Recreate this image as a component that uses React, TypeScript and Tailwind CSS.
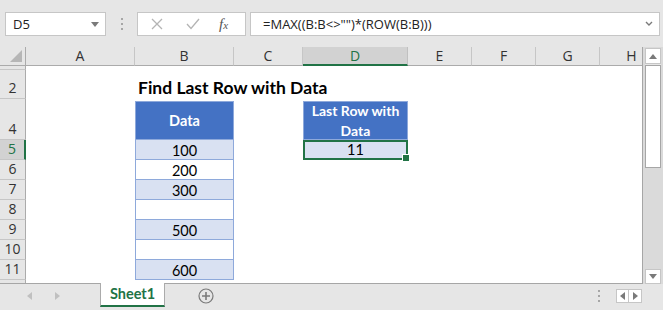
import React from "react";

const COLS = ["A", "B", "C", "D", "E", "F", "G", "H"];

function Tri({ dir, className }: { dir: "up" | "down" | "left" | "right"; className?: string }) {
  const pts: Record<string, string> = {
    up: "0,5 4,0 8,5",
    down: "0,0 8,0 4,5",
    left: "5,0 5,8 0,4",
    right: "0,0 0,8 5,4",
  };
  const w = dir === "up" || dir === "down" ? 8 : 5;
  const h = dir === "up" || dir === "down" ? 5 : 8;
  return (
    <svg width={w} height={h} viewBox={`0 0 ${w} ${h}`} className={className}>
      <polygon points={pts[dir]} fill="currentColor" />
    </svg>
  );
}

function Dots() {
  return (
    <div className="flex flex-col gap-[3px]">
      <div className="w-[2px] h-[2px] bg-[#a6a6a6]" />
      <div className="w-[2px] h-[2px] bg-[#a6a6a6]" />
      <div className="w-[2px] h-[2px] bg-[#a6a6a6]" />
    </div>
  );
}

export default function App() {
  const tableRows = [
    { r: 5, v: "100" },
    { r: 6, v: "200" },
    { r: 7, v: "300" },
    { r: 8, v: "" },
    { r: 9, v: "500" },
    { r: 10, v: "" },
    { r: 11, v: "600" },
  ];
  const gridRow = (r: number) => r + 1;
  const rowLabels = [
    { r: 1, label: "" },
    { r: 2, label: "2" },
    { r: 3, label: "" },
    { r: 4, label: "4" },
    { r: 5, label: "5" },
    { r: 6, label: "6" },
    { r: 7, label: "7" },
    { r: 8, label: "8" },
    { r: 9, label: "9" },
    { r: 10, label: "10" },
    { r: 11, label: "11" },
  ];

  return (
    <div
      className="w-[663px] h-[310px] bg-[#e6e6e6] flex flex-col overflow-hidden text-[#222]"
      style={{ fontFamily: '"Open Sans", "Liberation Sans", sans-serif' }}
    >
      {/* Formula bar */}
      <div className="h-[47px] flex items-start pt-[12px] pl-[5px]">
        <div className="w-[101px] h-[24px] bg-white border border-[#c6c6c6] flex items-center pl-[7px] pr-[6px] justify-between">
          <span className="text-[13px] leading-none">D5</span>
          <Tri dir="down" className="text-[#7a7a7a]" />
        </div>
        <div className="w-[31px] h-[24px] flex items-center justify-center">
          <Dots />
        </div>
        <div className="w-[109px] h-[24px] bg-white border border-[#c6c6c6] flex items-center">
          <svg width="12" height="12" viewBox="0 0 12 12" className="ml-[13px]">
            <path d="M1 1 L11 11 M11 1 L1 11" stroke="#b4b4b4" strokeWidth="1.3" fill="none" />
          </svg>
          <svg width="14" height="12" viewBox="0 0 14 12" className="ml-[23px]">
            <path d="M1 6 L5 10.5 L13 1" stroke="#b4b4b4" strokeWidth="1.3" fill="none" />
          </svg>
          <span
            className="ml-[19px] text-[15px] italic leading-none text-[#555]"
            style={{ fontFamily: '"Liberation Serif", serif' }}
          >
            f<span className="text-[11px]">x</span>
          </span>
        </div>
        <div className="ml-[4px] w-[410px] h-[24px] bg-white border border-[#c6c6c6] flex items-center pl-[12px] pr-[6px] justify-between">
          <span className="text-[13px] leading-none whitespace-pre">=MAX((B:B&lt;&gt;"")*(ROW(B:B)))</span>
          <svg width="8" height="6" viewBox="0 0 8 6">
            <path d="M1 1 L4 4 L7 1" stroke="#7a7a7a" strokeWidth="1.4" fill="none" />
          </svg>
        </div>
      </div>

      {/* Sheet area */}
      <div className="flex h-[237px]">
        <div className="w-[643px] h-[237px] overflow-hidden bg-white border-r border-b border-[#a6a6a6]">
          <div className="grid grid-cols-[26px_109px_99px_69px_105px_64px_64px_64px_64px] grid-rows-[19px_4px_29px_2px_39px_20px_20px_20px_20px_20px_20px_20px_4px] w-[664px]">
            <div className="col-start-1 row-start-1 bg-[#e6e6e6] border-r border-b border-[#ababab] relative">
              <svg width="12" height="12" viewBox="0 0 12 12" className="absolute right-[3px] bottom-[3px]">
                <polygon points="12,0 12,12 0,12" fill="#b6b6b6" />
              </svg>
            </div>
            {COLS.map((c, i) => {
              const sel = c === "D";
              return (
                <div
                  key={c}
                  className={
                    "row-start-1 flex items-center justify-center text-[14px] leading-none border-r " +
                    (sel
                      ? "bg-[#d2d2d2] border-[#c0c0c0] border-b-2 border-b-[#217346] text-[#217346]"
                      : "bg-[#e6e6e6] border-[#c6c6c6] border-b border-b-[#ababab] text-[#333]")
                  }
                  style={{ gridColumnStart: i + 2 }}
                >
                  <span className={sel ? "mt-[1px]" : ""}>{c}</span>
                </div>
              );
            })}
            {rowLabels.map(({ r, label }) => {
              const sel = r === 5;
              return (
                <div
                  key={r}
                  className={
                    "col-start-1 flex items-end justify-center text-[14px] leading-none border-b border-b-[#c6c6c6] " +
                    (sel
                      ? "bg-[#d2d2d2] border-r-2 border-r-[#217346] text-[#217346] pb-[3px]"
                      : "bg-[#e6e6e6] border-r border-r-[#ababab] text-[#333] pb-[3px]")
                  }
                  style={{ gridRowStart: gridRow(r) }}
                >
                  {label}
                </div>
              );
            })}
            <div className="col-start-1 row-start-13 bg-[#e6e6e6] border-r border-[#ababab]" />

            <div
              className="col-start-3 col-span-4 row-start-3 flex items-end pl-[3px] pb-[3px] text-[17.5px] font-bold leading-none text-black whitespace-nowrap"
              style={{ fontFamily: 'Lato, "Open Sans", sans-serif' }}
            >
              Find Last Row with Data
            </div>

            <div
              className="col-start-3 row-start-5 bg-[#4472c4] border border-[#8ea9db] flex items-center justify-center text-white font-bold text-[14.5px]"
              style={{ fontFamily: 'Lato, "Open Sans", sans-serif' }}
            >
              Data
            </div>
            {tableRows.map(({ r, v }) => (
              <div
                key={r}
                className={
                  "col-start-3 border-l border-r border-b border-[#8ea9db] flex items-end justify-center pb-[1px] text-[14.5px] leading-none text-black " +
                  (r % 2 === 1 ? "bg-[#d9e1f2]" : "bg-white")
                }
                style={{ gridRowStart: gridRow(r), fontFamily: 'Lato, "Open Sans", sans-serif' }}
              >
                {v}
              </div>
            ))}

            <div
              className="col-start-5 row-start-5 bg-[#4472c4] border border-[#8ea9db] flex items-center justify-center text-center text-white font-bold text-[14px] leading-[20px]"
              style={{ fontFamily: 'Lato, "Open Sans", sans-serif' }}
            >
              Last Row with
              <br />
              Data
            </div>
            <div
              className="col-start-5 row-start-6 relative bg-[#d9e1f2] border-2 border-[#217346] flex items-end justify-center text-[14.5px] leading-none text-black pb-[1px]"
              style={{ fontFamily: 'Lato, "Open Sans", sans-serif' }}
            >
              11
              <div className="absolute right-[-4px] bottom-[-4px] w-[6px] h-[6px] bg-[#217346] border border-white box-content" />
            </div>
          </div>
        </div>

        <div className="w-[20px] h-[237px] bg-[#dadada] flex flex-col items-center pt-[1px]">
          <div className="w-[16px] h-[16px] bg-white border border-[#c6c6c6] flex items-center justify-center">
            <Tri dir="up" className="text-[#7a7a7a]" />
          </div>
          <div className="w-[16px] h-[1px] bg-[#e6e6e6]" />
          <div className="w-[16px] h-[103px] bg-white border border-[#a6a6a6]" />
          <div className="flex-1" />
          <div className="w-[16px] h-[15px] bg-white border border-[#c6c6c6] flex items-center justify-center">
            <Tri dir="down" className="text-[#7a7a7a]" />
          </div>
        </div>
      </div>

      <div className="h-[26px] flex items-start relative">
        <div className="w-[100px] h-[24px] flex items-center">
          <Tri dir="left" className="ml-[27px] text-[#c0c0c0]" />
          <Tri dir="right" className="ml-[23px] text-[#c0c0c0]" />
        </div>
        <div className="w-[65px] h-[24px] bg-white border-l border-r border-[#ababab] border-b-2 border-b-[#217346] flex items-center justify-center -mt-[1px]">
          <span
            className="text-[14.5px] font-bold text-[#217346] leading-none"
            style={{ fontFamily: 'Lato, "Open Sans", sans-serif' }}
          >
            Sheet1
          </span>
        </div>
        <div className="ml-[33px] h-[24px] flex items-center">
          <svg width="16" height="16" viewBox="0 0 16 16">
            <circle cx="8" cy="8" r="7" stroke="#7a7a7a" strokeWidth="1.2" fill="none" />
            <path d="M8 4 V12 M4 8 H12" stroke="#7a7a7a" strokeWidth="1.6" />
          </svg>
        </div>
        <div className="ml-auto flex items-center h-[24px] pr-[21px]">
          <Dots />
          <div className="ml-[16px] flex">
            <div className="w-[13px] h-[14px] bg-white border border-[#c6c6c6] flex items-center justify-center">
              <Tri dir="left" className="text-[#7a7a7a]" />
            </div>
            <div className="w-[13px] h-[14px] bg-white border border-l-0 border-[#c6c6c6] flex items-center justify-center">
              <Tri dir="right" className="text-[#7a7a7a]" />
            </div>
          </div>
        </div>
      </div>
    </div>
  );
}
